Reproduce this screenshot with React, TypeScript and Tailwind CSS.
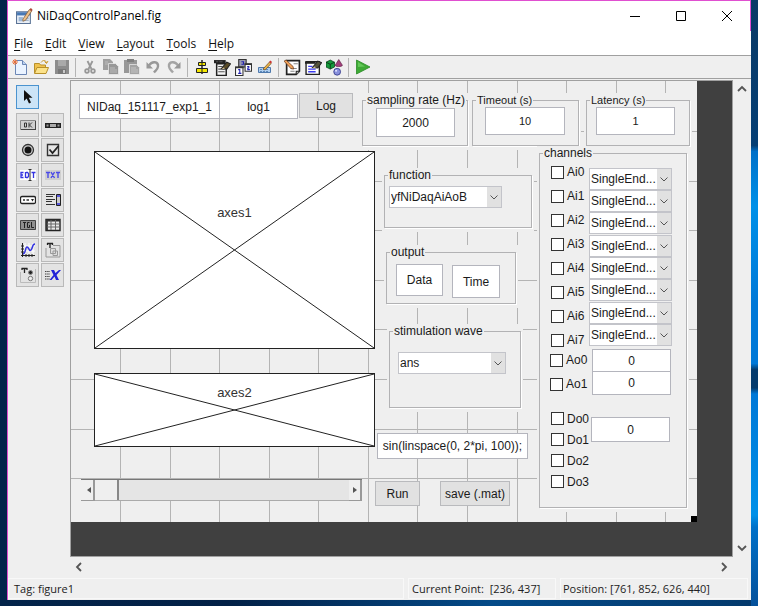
import { useId, type ReactNode } from "react";

const CHROME_FONT = "font-['Open_Sans','Noto_Sans',sans-serif]";
const FIGURE_FONT = "font-['Liberation_Sans',Arial,sans-serif]";

const GRID_X = [49, 99, 148, 198, 247, 297, 346, 396, 446, 495, 545, 594];
const GRID_Y = [50, 100, 149, 199, 248, 298, 348, 397];
const ANALOG_INPUTS = ["Ai0", "Ai1", "Ai2", "Ai3", "Ai4", "Ai5", "Ai6", "Ai7"];
const DIGITAL_OUTPUTS = ["Do0", "Do1", "Do2", "Do3"];

function Icon({ children, size = "size-4" }: { children: ReactNode; size?: string }) {
  return (
    <svg viewBox="0 0 16 16" className={`${size} shrink-0`} aria-hidden="true">
      {children}
    </svg>
  );
}

/* ---------- toolbar drawings ---------- */

const newIcon = (
  <Icon>
    <path d="M3.5 1.5h7l4 4v10h-11z" fill="#eaf3ff" stroke="#6b86b5" />
    <path d="M10.5 1.5v4h4" fill="#bcd2f0" stroke="#6b86b5" />
    <path d="M3 0v6M0 3h6M1 1l4 4M5 1L1 5" stroke="#e8703a" />
  </Icon>
);
const openIcon = (
  <Icon>
    <path d="M1.5 14V4.500h5l1 1.500h5v3" fill="#f0c24e" stroke="#b8902a" />
    <path d="M1.5 14.500L4 8.500h11.500L13 14.500z" fill="#fbe28a" stroke="#b8902a" />
    <path d="M8 3.500c2-3 5-2.500 5.500.5M11.500 2.500l2 2 1.500-2.500" fill="none" stroke="#c9982c" />
  </Icon>
);
const saveIcon = (
  <Icon>
    <path d="M1 1h14v14H1z" fill="#8c8c8c" />
    <path d="M4 1h8v6H4z" fill="#a9a9a9" />
    <path d="M4 10h8v5H4z" fill="#777" />
    <path d="M9 11h2v3H9z" fill="#c8c8c8" />
  </Icon>
);
const cutIcon = (
  <Icon>
    <path d="M5.500 2l4 8M10.500 2L6.500 10" stroke="#989898" strokeWidth="1.800" />
    <circle cx="5" cy="12" r="1.800" fill="none" stroke="#989898" strokeWidth="1.800" />
    <circle cx="11" cy="12" r="1.800" fill="none" stroke="#989898" strokeWidth="1.800" />
  </Icon>
);
const copyIcon = (
  <Icon>
    <path d="M0 0h7l3 3v8H0z" fill="#a0a0a0" />
    <path d="M5.500 4.500h7l3 3v8h-10z" fill="#989898" stroke="#efefef" strokeWidth=".7" />
    <path d="M2 3h3M2 5h3M7 9h5M7 11h7M7 13h7" stroke="#bcbcbc" />
  </Icon>
);
const pasteIcon = (
  <Icon>
    <path d="M0 1h13v13H0z" fill="#989898" />
    <path d="M3 0h7v3H3z" fill="#808080" />
    <path d="M5.500 5.500h7l3 3v7h-10z" fill="#a4a4a4" stroke="#efefef" strokeWidth=".7" />
    <path d="M7 9h5M7 11h7M7 13h7" stroke="#c4c4c4" />
  </Icon>
);
const undoIcon = (
  <Icon>
    <path d="M4 6.500C7 1.500 13.500 2.500 13 7.500c-.3 3-2.500 4-4 6" fill="none" stroke="#989898" strokeWidth="2.400" />
    <path d="M1.500 3v6.500H8z" fill="#989898" />
  </Icon>
);
const redoIcon = (
  <Icon>
    <path d="M12 6.500C9 1.500 2.500 2.500 3 7.500c.3 3 2.500 4 4 6" fill="none" stroke="#a4a4a4" strokeWidth="2.400" />
    <path d="M14.500 3v6.500H8z" fill="#989898" />
  </Icon>
);
const alignIcon = (
  <Icon>
    <path d="M8 1v14" stroke="#222" strokeWidth="1.500" />
    <path d="M4.500 3.500h7v3h-7zM2.500 9.500h11v4h-11z" fill="#f5e800" stroke="#222" />
    <path d="M8 4v2M8 10v3" stroke="#222" />
  </Icon>
);
const menuEditorIcon = (
  <Icon size="size-[17px]">
    <path d="M0 1h11v3H0z" fill="#222" />
    <path d="M2.500 4.500h9v11h-9z" fill="#f4f4f4" stroke="#222" strokeWidth="1.400" />
    <path d="M2 2.500h2M5 2.500h3M4 7h4M4 9.500h6M4 12h6" stroke="#555" />
    <path d="M7 9l5-6 3.500 1.500L12 9.500z" fill="#5a4c28" stroke="#222" />
    <path d="M7 9l2.500-1 .5 1.500z" fill="#f1d9a0" />
  </Icon>
);
const tabOrderIcon = (
  <Icon size="size-[17px]">
    <path d="M3.500.5h7v7h-7z" fill="#9a9ab0" stroke="#333" />
    <path d="M9.500 4.500h6v7h-6zM.5 7.500h7v8h-7z" fill="#fff" stroke="#333" />
    <path d="M0 8h8M9 5h7" stroke="#333" strokeWidth="1.500" />
    <path d="M6 2.500h2v2.500H6M11.500 7H13v1.500h-1v1.500h2M3 10h1.500v3.500M3 13.500h3" fill="none" stroke="#2222b0" />
  </Icon>
);
const toolbarEditorIcon = (
  <Icon>
    <path d="M1.500 8.500h12v5h-12z" fill="#aecdee" stroke="#4e79ad" />
    <path d="M3 10.500h9M3 12.500h9" stroke="#5d87b8" strokeDasharray="2 1" />
    <path d="M6 10l6.500-7 1.700 1.500L8 11z" fill="#e8b24a" stroke="#6b4a1c" strokeWidth=".7" />
    <path d="M12 3l1.500-1.500L15 3l-1 1.500z" fill="#c33" />
  </Icon>
);
const editorIcon = (
  <Icon size="size-[17px]">
    <path d="M2.500 1.500h12v10l-3 3h-9z" fill="#fff" stroke="#222" strokeWidth="1.600" />
    <path d="M14.500 11.500h-3v3" fill="#bbb" stroke="#222" />
    <path d="M6 9h6M6 11.500h4M9 4.500h4" stroke="#888" />
    <path d="M0 2l2-1 6.500 6 .5 2.500L6.500 9z" fill="#f0a35c" stroke="#6b3a1c" strokeWidth=".7" />
  </Icon>
);
const inspectorIcon = (
  <Icon size="size-[17px]">
    <path d="M1 2.500h12.500v12H1z" fill="#fff" stroke="#222" strokeWidth="1.300" />
    <path d="M0 3.500h10" stroke="#222" strokeWidth="2" />
    <path d="M3 7h4M3 9.500h7M3 12h7" stroke="#3c3cf0" strokeWidth="1.200" />
    <path d="M7 8l5-6 3.500 1.500L12 8.500z" fill="#54533c" stroke="#222" />
    <path d="M7 8l2.500-1 .5 1.500z" fill="#f1d9a0" />
  </Icon>
);
const browserIcon = (
  <Icon size="size-[17px]">
    <path d="M0 3l4-2 4 2v4.500L4 9.500 0 7.500z" fill="#149a3c" stroke="#0a3d18" strokeWidth=".7" />
    <path d="M0 3l4 2 4-2M4 5v4.500" fill="none" stroke="#0a3d18" strokeWidth=".9" />
    <path d="M12 .5L15.500 6c-1 1.500-6 1.500-7 0z" fill="#a3407c" stroke="#5c1c44" strokeWidth=".6" />
    <circle cx="10.500" cy="12" r="3.200" fill="#8890dc" stroke="#34398a" strokeWidth=".8" />
    <circle cx="9.500" cy="11" r="1" fill="#dfe2ff" />
  </Icon>
);
const runIcon = (
  <Icon>
    <path d="M1.500 1v14L15 8z" fill="#3eaa35" stroke="#2a8a26" strokeWidth=".8" />
    <path d="M3 3v5l7-.5z" fill="#63c858" />
  </Icon>
);

const TOOL_GROUPS: { label: string; icon: ReactNode }[][] = [
  [
    { label: "New Figure", icon: newIcon },
    { label: "Open Figure", icon: openIcon },
    { label: "Save Figure", icon: saveIcon },
  ],
  [
    { label: "Cut", icon: cutIcon },
    { label: "Copy", icon: copyIcon },
    { label: "Paste", icon: pasteIcon },
    { label: "Undo", icon: undoIcon },
    { label: "Redo", icon: redoIcon },
  ],
  [
    { label: "Align Objects", icon: alignIcon },
    { label: "Menu Editor", icon: menuEditorIcon },
    { label: "Tab Order Editor", icon: tabOrderIcon },
    { label: "Toolbar Editor", icon: toolbarEditorIcon },
  ],
  [
    { label: "Editor", icon: editorIcon },
    { label: "Property Inspector", icon: inspectorIcon },
    { label: "Object Browser", icon: browserIcon },
  ],
  [{ label: "Run Figure", icon: runIcon }],
];

/* ---------- component palette drawings ---------- */

const PALETTE: { label: string; icon: ReactNode }[] = [
  {
    label: "Push Button",
    icon: (
      <>
        <path d="M.5 3.500h15v9H.5z" fill="#cfcfcf" stroke="#888" />
        <path d="M1 12.500h15M15.500 4v9" stroke="#444" />
        <path d="M4.500 6h2v4h-2zM9 5.500v5M12 5.500L9.500 8 12 10.500" fill="none" stroke="#333" />
      </>
    ),
  },
  {
    label: "Slider",
    icon: (
      <>
        <path d="M0 6h16v5H0z" fill="#222" />
        <path d="M1.500 7.500h2v2h-2zM12.500 7.500h2v2h-2z" fill="#999" />
        <path d="M5 7h6v3H5z" fill="#aaa" />
      </>
    ),
  },
  {
    label: "Radio Button",
    icon: (
      <>
        <circle cx="8" cy="8" r="5.500" fill="#ccc" stroke="#333" strokeWidth="1.300" />
        <circle cx="8" cy="8" r="3.500" fill="#111" />
      </>
    ),
  },
  {
    label: "Check Box",
    icon: (
      <>
        <path d="M2.500 2.500h11v11h-11z" fill="#e6e6e6" stroke="#333" strokeWidth="1.400" />
        <path d="M4.500 7.500l3 3.500 6-7" fill="none" stroke="#222" strokeWidth="1.800" />
      </>
    ),
  },
  {
    label: "Edit Text",
    icon: (
      <>
        <path d="M0 3h16v10H0z" fill="#fff" />
        <path d="M3.500 5.500H1v5h2.500M1 8h2M5.500 5v6M6 5.500h1.500l1 1v3l-1 1H6M11.500 5.500h4M13.500 5.500V11" fill="none" stroke="#3434e0" strokeWidth="1.300" />
        <path d="M8.500 2.500h3M10 2.500v11M8.500 13.500h3" stroke="#333" />
      </>
    ),
  },
  {
    label: "Static Text",
    icon: (
      <>
        <path d="M0 3h16v10H0z" fill="#cfcfcf" />
        <path d="M1 5.500h4M3 5.500V11M6 5l3.500 6M9.500 5L6 11M11 5.500h4M13 5.500V11" fill="none" stroke="#4a4ae8" strokeWidth="1.400" />
      </>
    ),
  },
  {
    label: "Pop-up Menu",
    icon: (
      <>
        <rect x=".5" y="4.500" width="15" height="7" rx="1.500" fill="#fff" stroke="#222" strokeWidth="1.300" />
        <path d="M3 8h2M6.500 8H9" stroke="#333" strokeWidth="1.500" />
        <path d="M11 7h3l-1.500 2.500z" fill="#222" />
      </>
    ),
  },
  {
    label: "Listbox",
    icon: (
      <>
        <path d="M1 2.500h9M1 4.500h7M1 7.500h9M1 9.500h6M1 12.500h9" stroke="#333" strokeWidth="1.200" />
        <path d="M11.500 2.500h4v11h-4z" fill="#ccc" stroke="#222" />
        <path d="M12 4h3M12 12h3" stroke="#3434e0" strokeWidth="1.500" />
      </>
    ),
  },
  {
    label: "Toggle Button",
    icon: (
      <>
        <path d="M.5 3.500h15v9H.5z" fill="#909090" stroke="#444" />
        <path d="M3 5.500h3M4.500 5.500V11M9.500 5.500h-2v5h2V8M11.500 5v5.500h2.500" fill="none" stroke="#222" />
      </>
    ),
  },
  {
    label: "Table",
    icon: (
      <>
        <path d="M1 2.500h14v11H1z" fill="#e8e8e8" stroke="#222" strokeWidth="1.400" />
        <path d="M1 3.500h14M2 3v10" stroke="#333" strokeWidth="1.800" />
        <path d="M6 3v10M10.500 3v10M2 7h13M2 10h13" stroke="#666" />
      </>
    ),
  },
  {
    label: "Axes",
    icon: (
      <>
        <path d="M5 1v12M9 1v12M13 1v12M3 4h12M3 9h12" stroke="#fff" />
        <path d="M2.500 1v14M1 13.500h14M1 4h3M1 7h3M1 10h3M6 12v3M9 12v3M12 12v3" stroke="#222" />
        <path d="M3 12c3 0 2-7 4-7s2 5 4 3 1-6 4-6" fill="none" stroke="#3434e0" strokeWidth="1.500" />
      </>
    ),
  },
  {
    label: "Panel",
    icon: (
      <>
        <path d="M8 3.500h7v11.500H1V6" fill="none" stroke="#999" />
        <path d="M2 1.500h6M5 1.500V6M2.500 1v2M7.500 1v2" stroke="#222" strokeWidth="1.300" />
        <path d="M5.500 6.500h5v5h-5zM8 9h4.500v4.500H8z" fill="#ddd" stroke="#999" />
      </>
    ),
  },
  {
    label: "Button Group",
    icon: (
      <>
        <path d="M.5 5v10.500h15V2" fill="none" stroke="#bbb" />
        <path d="M1.500 1.500h6M4.500 1.500V6M2 1v2M7 1v2" stroke="#222" strokeWidth="1.300" />
        <circle cx="10.500" cy="5.500" r="2" fill="#222" stroke="#888" />
        <circle cx="10.500" cy="11.500" r="2.200" fill="#eee" stroke="#777" />
      </>
    ),
  },
  {
    label: "ActiveX Control",
    icon: (
      <>
        <path d="M0 4.500h5M0 7h5M0 9.500h5M0 12h5" stroke="#444" strokeDasharray="1.500 .7" />
        <path d="M6 3h3l1.500 3L14 3h2l-4.500 5 2.500 5h-3l-1.500-3.500L6.500 13h-2L8.500 8z" fill="#2222d8" />
      </>
    ),
  },
];

/* ---------- shared controls ---------- */

function Panel({ title, className, children }: { title: string; className: string; children: ReactNode }) {
  return (
    <div className={`bg-[#efefef] shadow-[0_2px_0_2px_#efefef] ${className}`}>
      <fieldset className="h-full min-w-0 border border-[#b2b2b4] shadow-[1px_1px_0_#fff]">
        <legend className="ml-[3px] h-[14px] bg-[#efefef] px-px leading-[14px] whitespace-nowrap">{title}</legend>
        {children}
      </fieldset>
    </div>
  );
}

function Field({ label, value, className }: { label: string; value: string; className: string }) {
  return (
    <input
      aria-label={label}
      defaultValue={value}
      className={`block border border-[#b4b5bd] bg-white text-center text-[#1a1a1a] outline-none ${className}`}
    />
  );
}

function Dropdown({ label, value, className }: { label: string; value: string; className: string }) {
  return (
    <div className={`relative border border-[#c3c4ca] ${className}`}>
      <select aria-label={label} className="block size-full appearance-none bg-white pl-px text-[#1a1a1a] outline-none">
        <option>{value}</option>
      </select>
      <span className="pointer-events-none absolute inset-y-0 right-0 flex w-[14px] items-center justify-center bg-[#e1e1e1]">
        <svg viewBox="0 0 8 5" className="h-[5px] w-2" aria-hidden="true">
          <path d="M.5.5L4 4 7.500.5" fill="none" stroke="#555" />
        </svg>
      </span>
    </div>
  );
}

function Check({ label, className }: { label: string; className: string }) {
  const id = useId();
  return (
    <div className={`flex items-center gap-[3px] ${className}`}>
      <input
        id={id}
        type="checkbox"
        className="size-[13px] shrink-0 appearance-none border border-[#333] bg-white checked:bg-[#333]"
      />
      <label htmlFor={id}>{label}</label>
    </div>
  );
}

function Axes({ name, className }: { name: string; className: string }) {
  return (
    <div className={`relative border border-[#222] bg-white text-center ${className}`}>
      <svg viewBox="0 0 100 100" preserveAspectRatio="none" className="absolute inset-0 size-full" aria-hidden="true">
        <path d="M0 0L100 100M0 100L100 0" stroke="#222" vectorEffect="non-scaling-stroke" />
      </svg>
      <span className="relative text-[13px] leading-4 text-[#333]">{name}</span>
    </div>
  );
}

function Chevron({ d, label }: { d: string; label: string }) {
  return (
    <button aria-label={label} className="flex size-[18px] items-center justify-center">
      <svg viewBox="0 0 10 10" className="size-[10px]" aria-hidden="true">
        <path d={d} fill="none" stroke="#555" strokeWidth="1.800" />
      </svg>
    </button>
  );
}

/* ---------- regions of the window ---------- */

function TitleBar() {
  return (
    <header className="flex h-[30px] items-center border-r border-[#e04fd0] bg-white pl-2">
      <Icon size="size-[17px]">
        <path d="M.5 3.500h13v11H.5z" fill="#e8eef6" stroke="#5b7396" />
        <path d="M1 4h12v3H1z" fill="#4778b5" />
        <path d="M2.500 8.500h4v4h-4z" fill="#9db7d6" />
        <path d="M8 9.500h4M8 11.500h4" stroke="#8fa3bd" />
        <path d="M6.500 10.500l6-9 2.500 1-6 9-2.500 1z" fill="#efc089" stroke="#7a5a3a" strokeWidth=".7" />
        <path d="M12.500 1.500L14 0l1.500 1.500-.5 1.500z" fill="#b04a3a" />
      </Icon>
      <h1 className="ml-1 flex-1 text-[12px] leading-4 text-black">NiDaqControlPanel.fig</h1>
      <div className="flex">
        <button aria-label="Minimize" className="flex h-[29px] w-[46px] items-center justify-center">
          <svg viewBox="0 0 10 10" className="size-[10px]"><path d="M0 5.500h10" stroke="#000" /></svg>
        </button>
        <button aria-label="Maximize" className="flex h-[29px] w-[46px] items-center justify-center">
          <svg viewBox="0 0 10 10" className="size-[10px]"><path d="M.5.5h9v9h-9z" fill="none" stroke="#000" /></svg>
        </button>
        <button aria-label="Close" className="flex h-[29px] w-[46px] items-center justify-center">
          <svg viewBox="0 0 10 10" className="size-[10px]"><path d="M0 0l10 10M10 0L0 10" stroke="#000" /></svg>
        </button>
      </div>
    </header>
  );
}

function MenuBar() {
  return (
    <nav className="flex h-6 items-center gap-3 bg-white pt-[2px] pl-[6px] text-[12px] leading-4 text-[#111]">
      {["File", "Edit", "View", "Layout", "Tools", "Help"].map((name) => (
        <button key={name}>
          <span className="underline underline-offset-2">{name[0]}</span>
          {name.slice(1)}
        </button>
      ))}
    </nav>
  );
}

function ToolBar() {
  return (
    <div className="flex h-6 items-center border-y border-[#a0a0a0]">
      {TOOL_GROUPS.map((group, i) => (
        <div key={i} className="flex items-center border-r border-[#b4b4b4] px-[3px] first:pl-[1px] last:border-r-0">
          {group.map((tool) => (
            <button key={tool.label} aria-label={tool.label} className="flex h-[19px] w-[21px] items-center justify-center">
              {tool.icon}
            </button>
          ))}
        </div>
      ))}
    </div>
  );
}

function Palette() {
  return (
    <aside className="w-[62px] shrink-0 pt-[5px] pl-2">
      <button aria-label="Select" className="flex h-6 w-[23px] items-center justify-center border border-[#4a93cf] bg-[#cce4f7]">
        <svg viewBox="0 0 12 16" className="h-4 w-3" aria-hidden="true">
          <path d="M2 1v11l2.700-2.500L7 14.500l2-1-2.200-4.700H10.500z" fill="#111" />
        </svg>
      </button>
      <div className="mt-1 grid w-12 grid-cols-2 gap-x-[2px] gap-y-px">
        {PALETTE.map((item) => (
          <button
            key={item.label}
            aria-label={item.label}
            className="flex h-6 w-[23px] items-center justify-center border border-[#b9b9b9] bg-[#e3e3e3]"
          >
            <Icon>{item.icon}</Icon>
          </button>
        ))}
      </div>
    </aside>
  );
}

function ScrollSlider() {
  return (
    <div className="ml-[10px] flex h-[22px] w-[281px] border-t border-[#777] bg-[#efefef]">
      <button aria-label="Slide left" className="flex w-[14px] items-center justify-center border-r-2 border-b border-[#999] pl-1">
        <svg viewBox="0 0 4 6" className="h-[6px] w-1"><path d="M4 0v6L0 3z" fill="#555" /></svg>
      </button>
      <input
        type="range"
        aria-label="slider"
        defaultValue={0}
        className="h-full min-w-0 flex-1 appearance-none border-b border-[#aaa] bg-[#e5e5e5] [&::-webkit-slider-thumb]:h-5 [&::-webkit-slider-thumb]:w-6 [&::-webkit-slider-thumb]:appearance-none [&::-webkit-slider-thumb]:border-r-2 [&::-webkit-slider-thumb]:border-[#888] [&::-webkit-slider-thumb]:bg-[#efefef]"
      />
      <button aria-label="Slide right" className="flex w-[13px] items-center justify-center border-r-2 border-b border-[#999]">
        <svg viewBox="0 0 4 6" className="h-[6px] w-1"><path d="M0 0v6l4-3z" fill="#555" /></svg>
      </button>
    </div>
  );
}

const PUSH = "border border-[#b9babd] bg-[#e1e1e1] text-[#1a1a1a]";

function FigureCanvas() {
  return (
    <section className={`relative isolate h-[441px] w-[626px] shrink-0 bg-[#efefef] text-[12px] leading-[14px] text-[#1a1a1a] ${FIGURE_FONT}`}>
      <svg className="absolute inset-0 -z-10 size-full" aria-hidden="true">
        {GRID_X.map((x) => (
          <path key={x} d={`M${x}.5 0v441`} stroke="#b4b4b4" />
        ))}
        {GRID_Y.map((y) => (
          <path key={y} d={`M0 ${y}.5h626`} stroke="#b4b4b4" />
        ))}
      </svg>

      <div className="flex h-[65px] items-start pt-3 pl-2">
        <Field label="file name" value="NIDaq_151117_exp1_1" className="mt-px h-[25px] w-[141px]" />
        <Field label="log name" value="log1" className="mt-px -ml-px h-[25px] w-[79px]" />
        <button className={`ml-px h-[25px] w-[54px] ${PUSH}`}>Log</button>
        <Panel title="sampling rate (Hz)" className="ml-[9px] h-[53px] w-[106px]">
          <Field label="sampling rate" value="2000" className="mt-px ml-[13px] h-[29px] w-[79px]" />
        </Panel>
        <Panel title="Timeout (s)" className="ml-1 h-[53px] w-[107px] text-[11px]">
          <Field label="timeout" value="10" className="ml-3 h-[28px] w-20" />
        </Panel>
        <Panel title="Latency (s)" className="ml-[7px] h-[53px] w-[104px] text-[11px]">
          <Field label="latency" value="1" className="ml-[9px] h-[28px] w-[79px]" />
        </Panel>
      </div>

      <div className="flex items-start">
        <div className="w-[304px] pt-[5px]">
          <Axes name="axes1" className="ml-[23px] h-[198px] pt-[53px]" />
          <Axes name="axes2" className="mt-6 mb-8 ml-[23px] h-[74px] pt-[11px]" />
          <ScrollSlider />
        </div>

        <div className="w-[164px] pt-[22px]">
          <Panel title="function" className="ml-[9px] h-[60px] w-[148px]">
            <Dropdown label="function" value="yfNiDaqAiAoB" className="mt-1 ml-1 h-[22px] w-[113px]" />
          </Panel>
          <Panel title="output" className="mt-[17px] ml-[11px] h-[59px] w-[130px]">
            <div className="mt-[5px] ml-[9px] flex gap-[9px]">
              <Field label="data output" value="Data" className="h-[32px] w-[47px]" />
              <Field label="time output" value="Time" className="mt-px h-[33px] w-[48px]" />
            </div>
          </Panel>
          <Panel title="stimulation wave" className="mt-5 ml-[14px] h-[84px] w-[132px]">
            <Dropdown label="stimulation wave" value="ans" className="mt-[14px] ml-2 h-[22px] w-[108px]" />
          </Panel>
          <Field
            label="stimulation expression"
            value="sin(linspace(0, 2*pi, 100));"
            className="mt-[25px] ml-[2px] h-[26px] w-[151px]"
          />
          <div className="mt-[22px] flex gap-5">
            <button className={`h-[25px] w-[45px] ${PUSH}`}>Run</button>
            <button className={`h-[25px] w-[70px] ${PUSH}`}>save (.mat)</button>
          </div>
        </div>

        <Panel title="channels" className="h-[362px] w-[148px]">
          <div className="flex">
            <div className="ml-[10px] w-[39px]">
              {ANALOG_INPUTS.map((name) => (
                <Check key={name} label={name} className="h-6 pl-px" />
              ))}
              <Check label="Ao0" className="h-4" />
              <Check label="Ao1" className="mt-1 mb-3 h-6" />
              {DIGITAL_OUTPUTS.map((name) => (
                <Check key={name} label={name} className="h-[21px] pl-px" />
              ))}
            </div>
            <div className="pt-2">
              {ANALOG_INPUTS.map((name) => (
                <Dropdown key={name} label={`${name} mode`} value="SingleEnd..." className="h-[22px] w-[83px] nth-[3n+4]:mt-px" />
              ))}
              <Field label="Ao0 value" value="0" className="mt-[3px] ml-[3px] h-[23px] w-[79px]" />
              <Field label="Ao1 value" value="0" className="-mt-px ml-[3px] h-6 w-[79px]" />
              <Field label="digital output value" value="0" className="mt-[22px] ml-[2px] h-[25px] w-[79px]" />
            </div>
          </div>
        </Panel>
      </div>

      <span className="absolute right-0 bottom-0 size-[6px] bg-black" />
    </section>
  );
}

function StatusBar() {
  return (
    <footer className="flex h-[23px] items-center text-[11px] leading-4 text-[#222]">
      <span className="h-[21px] flex-1 border border-[#f8f8f8] pl-[5px] leading-[20px]">Tag: figure1</span>
      <span className="ml-1 h-[21px] w-[148px] border border-[#f8f8f8] pl-[3px] leading-[20px] whitespace-pre">Current Point:  [236, 437]</span>
      <span className="mr-[3px] ml-1 h-[21px] w-[188px] border border-[#f8f8f8] pl-[2px] leading-[20px]">Position: [761, 852, 626, 440]</span>
    </footer>
  );
}

export default function App() {
  return (
    <div className="h-screen bg-[linear-gradient(90deg,#03244a_0%,#022046_30%,#044a88_65%,#03396c_100%)]">
      <div className="flex h-full bg-[linear-gradient(180deg,#0a3a66_0%,#043e74_24%,#0070c8_25%,#0090e8_34%,#0078d7_50%,#0078d7_60%,#043a6c_61%,#043a6c_64%,#0078d7_65%,#0090e8_85%,#0070c8_87%,#04509a_100%)] bg-[length:7px_100%] bg-right bg-no-repeat pr-[7px] pb-[6px] pl-[7px]">
        <main className={`flex min-w-0 flex-1 flex-col border-t border-l border-[#e04fd0] bg-[#efefef] ${CHROME_FONT}`}>
          <TitleBar />
          <MenuBar />
          <ToolBar />
          <div className="mt-px flex min-h-0 flex-1">
            <Palette />
            <div className="flex min-w-0 flex-1 flex-col">
              <div className="flex min-h-0 flex-1">
                <div className="min-w-0 flex-1 overflow-hidden border border-[#a0a0a0] bg-[#404040]">
                  <FigureCanvas />
                </div>
                <div className="flex w-[18px] flex-col items-center justify-between">
                  <Chevron label="Scroll up" d="M1 7l4-4 4 4" />
                  <Chevron label="Scroll down" d="M1 3l4 4 4-4" />
                </div>
              </div>
              <div className="flex h-5 items-center justify-between pr-[18px]">
                <Chevron label="Scroll left" d="M7 1L3 5l4 4" />
                <Chevron label="Scroll right" d="M3 1l4 4-4 4" />
              </div>
            </div>
          </div>
          <StatusBar />
        </main>
      </div>
    </div>
  );
}
